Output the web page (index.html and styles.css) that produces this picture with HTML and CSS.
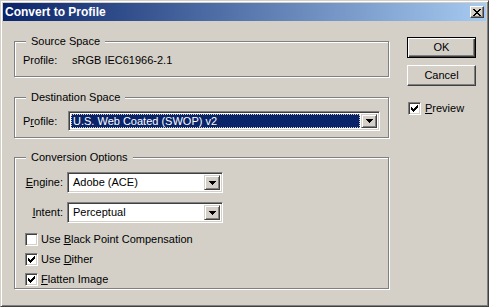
FILE: index.html
```html
<!DOCTYPE html>
<html lang="en">

<head>
    <meta charset="UTF-8">
    <title>Convert to Profile</title>
    <link rel="stylesheet" href="styles.css">
</head>

<body>
    <div class="window">
        <div class="titlebar">
            <span class="title">Convert to Profile</span>
            <span class="close">
                <svg width="8" height="7" viewBox="0 0 8 7">
                    <path d="M0 0h2v1H0z M6 0h2v1H6z M1 1h2v1H1z M5 1h2v1H5z M2 2h4v1H2z M3 3h2v1H3z M2 4h4v1H2z M1 5h2v1H1z M5 5h2v1H5z M0 6h2v1H0z M6 6h2v1H6z" fill="#000"/>
                </svg>
            </span>
        </div>

        <div class="content">
            <div class="main">
                <div class="group source">
                    <span class="legend">Source Space</span>
                    <div class="src_row"><span class="src_label">Profile:</span>sRGB IEC61966-2.1</div>
                </div>

                <div class="group dest">
                    <span class="legend">Destination Space</span>
                    <div class="row">
                        <span class="row_label dest_label">P<u>r</u>ofile:</span>
                        <div class="select wide focused">
                            <span class="value">U.S. Web Coated (SWOP) v2</span>
                            <span class="drop">
                                <svg width="7" height="4" viewBox="0 0 7 4"><path d="M0 0h7v1H0z M1 1h5v1H1z M2 2h3v1H2z M3 3h1v1H3z"/></svg>
                            </span>
                        </div>
                    </div>
                </div>

                <div class="group conv">
                    <span class="legend">Conversion Options</span>
                    <div class="row">
                        <span class="row_label"><u>E</u>ngine:</span>
                        <div class="select">
                            <span class="value">Adobe (ACE)</span>
                            <span class="drop">
                                <svg width="7" height="4" viewBox="0 0 7 4"><path d="M0 0h7v1H0z M1 1h5v1H1z M2 2h3v1H2z M3 3h1v1H3z"/></svg>
                            </span>
                        </div>
                    </div>
                    <div class="row intent_row">
                        <span class="row_label"><u>I</u>ntent:</span>
                        <div class="select">
                            <span class="value">Perceptual</span>
                            <span class="drop">
                                <svg width="7" height="4" viewBox="0 0 7 4"><path d="M0 0h7v1H0z M1 1h5v1H1z M2 2h3v1H2z M3 3h1v1H3z"/></svg>
                            </span>
                        </div>
                    </div>

                    <div class="checks">
                        <div class="check">
                            <span class="box"></span>
                            <span>Use <u>B</u>lack Point Compensation</span>
                        </div>
                        <div class="check">
                            <span class="box">
                                <svg width="7" height="7" viewBox="0 0 7 7"><path d="M0 2h1v3H0z M1 3h1v3H1z M2 4h1v3H2z M3 3h1v3H3z M4 2h1v3H4z M5 1h1v3H5z M6 0h1v3H6z"/></svg>
                            </span>
                            <span>Use <u>D</u>ither</span>
                        </div>
                        <div class="check">
                            <span class="box">
                                <svg width="7" height="7" viewBox="0 0 7 7"><path d="M0 2h1v3H0z M1 3h1v3H1z M2 4h1v3H2z M3 3h1v3H3z M4 2h1v3H4z M5 1h1v3H5z M6 0h1v3H6z"/></svg>
                            </span>
                            <span><u>F</u>latten Image</span>
                        </div>
                    </div>
                </div>
            </div>

            <div class="side">
                <div class="btn default">OK</div>
                <div class="btn">Cancel</div>
                <div class="check preview">
                    <span class="box">
                        <svg width="7" height="7" viewBox="0 0 7 7"><path d="M0 2h1v3H0z M1 3h1v3H1z M2 4h1v3H2z M3 3h1v3H3z M4 2h1v3H4z M5 1h1v3H5z M6 0h1v3H6z"/></svg>
                    </span>
                    <span><u>P</u>review</span>
                </div>
            </div>
        </div>
    </div>
</body>

</html>
```

FILE: styles.css
```css
body {
    margin: 0;
    font-family: 'Liberation Sans', Arial, sans-serif;
    font-size: 11px;
    line-height: 13px;
    color: #000;
    background: #d4d0c8;
}

u {
    text-decoration: underline;
    text-underline-offset: 1px;
}

.window {
    width: 489px;
    height: 307px;
    box-sizing: border-box;
    background: #d4d0c8;
    border: 1px solid;
    border-color: #d4d0c8 #404040 #404040 #d4d0c8;
    box-shadow: inset 1px 1px #fff, inset -1px -1px #808080;
    padding: 2px;
}

/* title bar */
.titlebar {
    height: 18px;
    display: flex;
    align-items: center;
    justify-content: space-between;
    padding: 0 2px;
    background: linear-gradient(to right, #0a246a, #a6caf0);
}

.title {
    color: #fff;
    font-weight: bold;
    font-size: 12px;
}

.close {
    width: 14px;
    height: 12px;
    box-sizing: border-box;
    display: flex;
    align-items: center;
    justify-content: center;
    background: #d4d0c8;
    border: 1px solid;
    border-color: #fff #404040 #404040 #fff;
    box-shadow: inset -1px -1px #808080;
}

.close svg {
    display: block;
}

/* dialog body */
.content {
    display: flex;
    gap: 18px;
    padding: 16px 0 0 11px;
}

.main {
    width: 375px;
    padding-top: 4px;
}

.group {
    position: relative;
    box-sizing: border-box;
    border: 1px solid #808080;
    box-shadow: inset 1px 1px #fff, 1px 1px #fff;
    padding: 0 8px;
}

.legend {
    position: absolute;
    top: -7px;
    left: 11px;
    padding: 0 5px 0 5px;
    background: #d4d0c8;
}

.source {
    height: 36px;
    padding-top: 12px;
}

.src_label {
    display: inline-block;
    width: 49px;
}

.dest {
    height: 41px;
    margin-top: 20px;
    padding-top: 13px;
}

.conv {
    height: 132px;
    margin-top: 19px;
    padding-top: 14px;
}

.row {
    display: flex;
    align-items: center;
}

.row_label {
    width: 40px;
    padding-right: 4px;
    text-align: right;
}

.dest_label {
    width: 45px;
    padding-right: 0;
    text-align: left;
}

.intent_row {
    margin-top: 9px;
}

/* combo boxes */
.select {
    width: 156px;
    height: 21px;
    box-sizing: border-box;
    display: flex;
    align-items: center;
    padding: 2px;
    background: #fff;
    border: 1px solid;
    border-color: #808080 #fff #fff #808080;
    box-shadow: inset 1px 1px #404040, inset -1px -1px #d4d0c8;
}

.select.wide {
    width: 312px;
    height: 20px;
}

.value {
    flex: 1;
    padding-left: 3px;
    white-space: nowrap;
}

.focused .value {
    align-self: stretch;
    display: flex;
    align-items: center;
    margin-right: 1px;
    padding-left: 2px;
    background: #0a246a;
    color: #fff;
    outline: 1px dotted #d4d0c8;
    outline-offset: -1px;
}

.drop {
    width: 16px;
    align-self: stretch;
    box-sizing: border-box;
    display: flex;
    align-items: center;
    justify-content: center;
    background: #d4d0c8;
    border: 1px solid;
    border-color: #d4d0c8 #404040 #404040 #d4d0c8;
    box-shadow: inset 1px 1px #fff, inset -1px -1px #808080;
}

.drop svg {
    display: block;
}

/* check boxes */
.checks {
    margin-top: 10px;
    padding-left: 2px;
}

.check {
    display: flex;
    align-items: center;
    gap: 3px;
    height: 13px;
    margin-bottom: 7px;
}

.box {
    width: 13px;
    height: 13px;
    box-sizing: border-box;
    flex: none;
    display: flex;
    align-items: center;
    justify-content: center;
    background: #fff;
    border: 1px solid;
    border-color: #808080 #fff #fff #808080;
    box-shadow: inset 1px 1px #404040, inset -1px -1px #d4d0c8;
}

.box svg {
    display: block;
}

/* right column */
.side {
    width: 69px;
    display: flex;
    flex-direction: column;
}

.btn {
    height: 21px;
    box-sizing: border-box;
    display: flex;
    align-items: center;
    justify-content: center;
    border: 1px solid;
    border-color: #fff #404040 #404040 #fff;
    box-shadow: inset -1px -1px #808080;
    margin-bottom: 7px;
}

.btn.default {
    border-color: #000;
    box-shadow: inset 1px 1px #fff, inset -1px -1px #404040, inset -2px -2px #808080;
    margin-bottom: 7px;
}

.preview {
    margin-top: 9px;
    margin-left: 1px;
    gap: 4px;
}
```
